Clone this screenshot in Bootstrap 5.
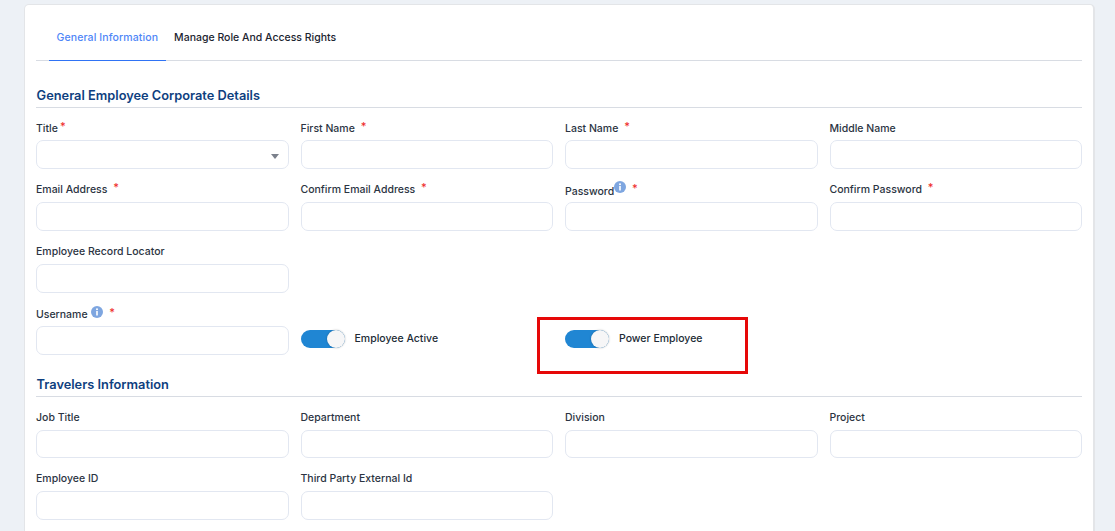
<!DOCTYPE html>
<html lang="en">
<head>
<meta charset="utf-8">
<title>Employee</title>
<link href="https://cdn.jsdelivr.net/npm/bootstrap@5.3.0/dist/css/bootstrap.min.css" rel="stylesheet">
<style>
html,body{height:531px;overflow:hidden}
body{background:#edf1f6;font-family:Inter,"Liberation Sans",sans-serif;font-size:10.5px;color:#212b36;padding:4px 20px 0 24px}
.sheet{background:#fff;border:1px solid #e3e5e8;border-right-width:2px;border-bottom:0;border-radius:5px 5px 0 0;height:527px;padding:0 11px;overflow:hidden}
.tabbar{margin:0;border-bottom:1px solid #d8dce3;height:56px;padding-left:12.5px;flex-wrap:nowrap}
.tabbar .nav-link{font-size:10.5px;font-weight:500;color:#1c2430;padding:0 8px;height:56px;line-height:66px;border-bottom:1px solid transparent;margin-bottom:-1px;background:none;border-radius:0}
.tabbar .nav-link.active{color:#4f86f7;border-bottom-color:#2f73f5;letter-spacing:.11px}
.sect{font-size:12.8px;font-weight:600;color:#0f3f7f;border-bottom:1px solid #d8dce3;margin:0;line-height:16px;padding-bottom:3px;text-indent:.6px}
.s1{margin-top:27px}
.s2{margin-top:21px}
.fields{--bs-gutter-x:12px;--bs-gutter-y:0}
.lbl{display:block;font-size:10.5px;font-weight:500;color:#2b3442;line-height:14px;margin:0 0 4px;padding-top:1px;height:15px;white-space:nowrap}
.lift .lbl{padding-top:0}
.t1 .lbl,.t2 .lbl{margin-bottom:5px}
.req{color:#ee2a2a;font-size:11px;line-height:1;margin-left:3px;position:relative;top:-2px}
.req.tight{margin-left:2px}
.inp.form-control,.inp.form-select{height:29px;min-height:0;padding:2px 8px;font-size:11px;border:1px solid #e2e7f1;border-radius:7px;box-shadow:none}
.inp.form-select{background-image:none}
.t1 .inp.form-control{height:28px}
.selwrap{position:relative}
.selwrap::after{content:"";position:absolute;right:10px;top:14px;border-left:4px solid transparent;border-right:4px solid transparent;border-top:5px solid #7b818c}
.fld{height:62px;padding-top:13px}
.t1{height:61px;padding-top:13px}
.t2{height:61px;padding-top:13px}
.tog{display:flex;align-items:center;gap:10px;padding-top:23px}
.togpill{width:44px;height:18px;border-radius:9px;background:#2086d3;position:relative;flex:none}
.togpill::after{content:"";position:absolute;right:0;top:0;width:18px;height:18px;border-radius:50%;background:#f6f6f7;box-shadow:0 0 2px rgba(0,0,0,.3)}
.toglbl{font-size:10.5px;font-weight:500;color:#212b36;position:relative}
.ico{position:relative;vertical-align:-1px}
.ico-a{top:-2px}
.ico-b{top:-1px;margin-left:1px}
.pwlbl{position:relative;top:1px}
.redbox{position:absolute;left:-22px;top:23px;width:211px;height:57px;border:3px solid #e60808;pointer-events:none}
</style>
</head>
<body>
<div class="sheet">
  <ul class="nav tabbar">
    <li class="nav-item"><a class="nav-link active" href="#">General Information</a></li>
    <li class="nav-item"><a class="nav-link" href="#">Manage Role And Access Rights</a></li>
  </ul>
  <h6 class="sect s1">General Employee Corporate Details</h6>
  <div class="row fields">
    <div class="col-3 fld"><label class="lbl">Title<span class="req tight">*</span></label><div class="selwrap"><select class="form-select inp"><option></option></select></div></div>
    <div class="col-3 fld"><label class="lbl">First Name <span class="req">*</span></label><input class="form-control inp"></div>
    <div class="col-3 fld"><label class="lbl">Last Name <span class="req">*</span></label><input class="form-control inp"></div>
    <div class="col-3 fld"><label class="lbl">Middle Name</label><input class="form-control inp"></div>

    <div class="col-3 fld lift"><label class="lbl">Email Address <span class="req">*</span></label><input class="form-control inp"></div>
    <div class="col-3 fld lift"><label class="lbl">Confirm Email Address <span class="req">*</span></label><input class="form-control inp"></div>
    <div class="col-3 fld lift"><label class="lbl"><span class="pwlbl">Password</span><svg class="ico ico-a" width="12" height="12" viewBox="0 0 12 12"><circle cx="6" cy="6" r="6" fill="#7ea6e0"/><circle cx="6" cy="3.2" r="1" fill="#fff"/><rect x="5.2" y="5" width="1.6" height="4.5" fill="#fff"/></svg> <span class="req">*</span></label><input class="form-control inp"></div>
    <div class="col-3 fld lift"><label class="lbl">Confirm Password <span class="req">*</span></label><input class="form-control inp"></div>

    <div class="col-3 fld lift"><label class="lbl">Employee Record Locator</label><input class="form-control inp"></div>
    <div class="col-9"></div>

    <div class="col-3 fld lift"><label class="lbl">Username <svg class="ico ico-b" width="12" height="12" viewBox="0 0 12 12"><circle cx="6" cy="6" r="6" fill="#7ea6e0"/><circle cx="6" cy="3.2" r="1" fill="#fff"/><rect x="5.2" y="5" width="1.6" height="4.5" fill="#fff"/></svg> <span class="req">*</span></label><input class="form-control inp"></div>
    <div class="col-3 fld"><div class="tog"><span class="togpill"></span><span class="toglbl">Employee Active</span></div></div>
    <div class="col-3 fld position-relative"><div class="tog"><span class="togpill"></span><span class="toglbl">Power Employee</span></div><div class="redbox"></div></div>
    <div class="col-3"></div>
  </div>
  <h6 class="sect s2">Travelers Information</h6>
  <div class="row fields">
    <div class="col-3 t1"><label class="lbl">Job Title</label><input class="form-control inp"></div>
    <div class="col-3 t1"><label class="lbl">Department</label><input class="form-control inp"></div>
    <div class="col-3 t1"><label class="lbl">Division</label><input class="form-control inp"></div>
    <div class="col-3 t1"><label class="lbl">Project</label><input class="form-control inp"></div>
    <div class="col-3 t2"><label class="lbl">Employee ID</label><input class="form-control inp"></div>
    <div class="col-3 t2"><label class="lbl">Third Party External Id</label><input class="form-control inp"></div>
  </div>
</div>
</body>
</html>
